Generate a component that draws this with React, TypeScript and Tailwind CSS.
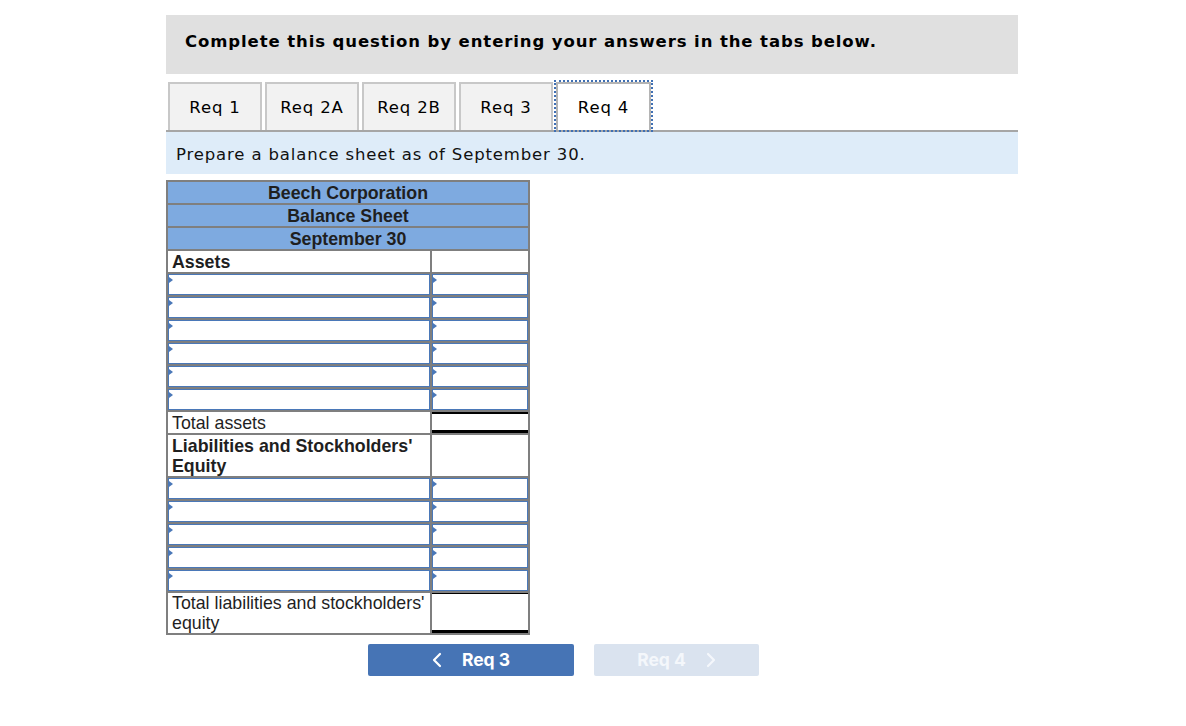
import React from 'react';

const tabs = ['Req 1', 'Req 2A', 'Req 2B', 'Req 3', 'Req 4'];

function InputCell() {
  return (
    <div className="relative h-full bg-white border border-[#4a78b8]">
      <span className="absolute left-0 top-[2px] w-0 h-0 border-y-[3px] border-y-transparent border-l-[4px] border-l-[#4a78b8]" />
    </div>
  );
}

function InputRow() {
  return (
    <>
      <div className="h-[21px]">
        <InputCell />
      </div>
      <div className="h-[21px]">
        <InputCell />
      </div>
    </>
  );
}

export default function App() {
  const verdana = { fontFamily: '"DejaVu Sans", Verdana, sans-serif' };
  const arial = { fontFamily: '"Liberation Sans", Arial, sans-serif' };

  return (
    <div className="min-h-[726px] bg-white pt-[15px]">
      <div className="ml-[166px] w-[852px]">
        {/* instructions */}
        <div className="bg-[#e0e0e0] h-[59px] pl-[19px] pt-[15px]" style={verdana}>
          <p className="text-[16.5px] font-bold text-black tracking-[0.9px]">
            Complete this question by entering your answers in the tabs below.
          </p>
        </div>

        {/* tabs */}
        <div className="mt-[8px] flex gap-[3px] pl-[2px] border-b-2 border-[#a6a6a6]" style={verdana}>
          {tabs.map((t) => {
            const active = t === 'Req 4';
            return (
              <div
                key={t}
                className={
                  active
                    ? 'w-[95px] h-[48px] flex items-center justify-center pt-[3px] bg-white border-2 border-b-0 border-[#b4b4b4] outline-2 outline-dotted outline-[#3f6fb3] text-[16.5px] tracking-[0.85px] text-black'
                    : 'w-[94px] h-[48px] flex items-center justify-center pt-[3px] bg-[#f2f2f2] border-2 border-b-0 border-[#c8c8c8] text-[16.5px] tracking-[0.85px] text-black'
                }
              >
                {t}
              </div>
            );
          })}
        </div>

        <div className="bg-[#deecf9] h-[42px] pl-[10px] pt-[11px] text-[16.5px] tracking-[0.85px] text-[#111]" style={verdana}>
          Prepare a balance sheet as of September 30.
        </div>

        {/* balance sheet */}
        <div className="mt-[6px] w-[364px] bg-[#7f7f7f] p-[2px] grid grid-cols-[262px_96px] gap-[2px] text-[17.8px] text-[#1f1f1f]" style={arial}>
          <div className="col-span-2 h-[21px] bg-[#7eaae0] font-bold text-center leading-[22px]">Beech Corporation</div>
          <div className="col-span-2 h-[21px] bg-[#7eaae0] font-bold text-center leading-[22px]">Balance Sheet</div>
          <div className="col-span-2 h-[21px] bg-[#7eaae0] font-bold text-center leading-[22px]">September 30</div>

          <div className="h-[21px] bg-white font-bold pl-[4px] leading-[22px]">Assets</div>
          <div className="h-[21px] bg-white" />

          {[0, 1, 2, 3, 4, 5].map((i) => (
            <InputRow key={i} />
          ))}

          <div className="h-[21px] bg-white pl-[4px] leading-[22px]">Total assets</div>
          <div className="h-[21px] bg-white border-t-2 border-black border-b-[3px] border-b-double" />

          <div className="h-[41px] bg-white font-bold pl-[4px] leading-[20px] pt-[1px]">
            Liabilities and Stockholders'
            <br />
            Equity
          </div>
          <div className="h-[41px] bg-white" />

          {[0, 1, 2, 3, 4].map((i) => (
            <InputRow key={i} />
          ))}

          <div className="h-[40px] bg-white pl-[4px] leading-[20px]">
            Total liabilities and stockholders'
            <br />
            equity
          </div>
          <div className="h-[40px] bg-white border-t border-black border-b-[3px] border-b-double" />
        </div>

        {/* navigation */}
        <div className="mt-[9px] ml-[202px] flex gap-[20px]" style={{ fontFamily: 'Inter, "Noto Sans", sans-serif' }}>
          <button className="w-[206px] h-[32px] rounded-[2px] bg-[#4674b5] text-white font-bold text-[17.5px] flex items-center justify-center gap-[20px]">
            <svg width="10" height="16" viewBox="0 0 10 16" fill="none">
              <path d="M8 2 L2 8 L8 14" stroke="white" strokeWidth="2.2" strokeLinecap="round" strokeLinejoin="round" />
            </svg>
            <span>Req 3</span>
          </button>
          <button className="w-[165px] h-[32px] rounded-[2px] bg-[#dae3ef] text-[#f4f7fb] font-bold text-[17.5px] flex items-center justify-center gap-[20px]">
            <span>Req 4</span>
            <svg width="10" height="16" viewBox="0 0 10 16" fill="none">
              <path d="M2 2 L8 8 L2 14" stroke="#f4f7fb" strokeWidth="2.2" strokeLinecap="round" strokeLinejoin="round" />
            </svg>
          </button>
        </div>
      </div>
    </div>
  );
}
